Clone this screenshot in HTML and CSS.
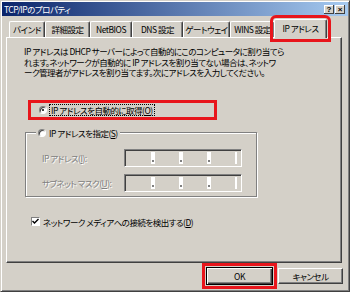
FILE: index.html
```html
<!DOCTYPE html>
<html lang="ja">
<head>
  <meta charset="UTF-8">
  <title>TCP/IPのプロパティ</title>
  <link rel="stylesheet" href="styles.css">
</head>
<body>

  <div class="dialog">
    <div class="titlebar">
      <span class="title">TCP/IPのプロパティ</span>
      <div class="caption-btns">
        <span class="cbtn">?</span>
        <span class="cbtn">×</span>
      </div>
    </div>

    <div class="tabs">
      <div class="tab">バインド</div>
      <div class="tab">詳細設定</div>
      <div class="tab">NetBIOS</div>
      <div class="tab">DNS 設定</div>
      <div class="tab">ゲートウェイ</div>
      <div class="tab">WINS 設定</div>
      <div class="tab active">IP アドレス</div>
    </div>

    <div class="panel">
      <p class="intro">IP アドレスは DHCP サーバーによって自動的にこのコンピュータに割り当てら<br>れます。ネットワークが自動的に IP アドレスを割り当てない場合は、ネットワ<br>ーク管理者がアドレスを割り当てます。次にアドレスを入力してください。</p>

      <div class="option marked">
        <span class="radio checked"></span>
        <span class="focus">IP アドレスを自動的に取得(<u>O</u>)</span>
      </div>

      <fieldset class="group">
        <legend><span class="radio"></span><span>IP アドレスを指定(<u>S</u>)</span></legend>
        <div class="field-row">
          <label class="disabled">IP アドレス(<u>I</u>):</label>
          <div class="ipbox">
            <span class="seg"></span><span class="sep"></span>
            <span class="seg"></span><span class="sep"></span>
            <span class="seg"></span><span class="sep"></span>
            <span class="seg"></span><span class="end"></span>
          </div>
        </div>
        <div class="field-row">
          <label class="disabled">サブネット マスク(<u>U</u>):</label>
          <div class="ipbox">
            <span class="seg"></span><span class="sep"></span>
            <span class="seg"></span><span class="sep"></span>
            <span class="seg"></span><span class="sep"></span>
            <span class="seg"></span><span class="end"></span>
          </div>
        </div>
      </fieldset>

      <div class="check-row">
        <span class="checkbox">
          <svg width="7" height="7" viewBox="0 0 7 7"><path d="M0.5 3 L2.5 5 L6.5 1" fill="none" stroke="#000" stroke-width="1.4"/></svg>
        </span>
        <span>ネットワーク メディアへの接続を検出する(<u>D</u>)</span>
      </div>
    </div>

    <div class="buttons">
      <button class="btn default">OK</button>
      <button class="btn">キャンセル</button>
    </div>
  </div>

</body>
</html>
```

FILE: styles.css
```css
body {
  margin: 0;
  font-family: "Noto Sans CJK JP", "Liberation Sans", sans-serif;
  font-size: 8.5px;
  letter-spacing: -0.5px;
  font-feature-settings: "palt";
  color: #000;
  background: #d4d0c8;
}

.dialog {
  width: 350px;
  height: 292px;
  box-sizing: border-box;
  background: #d4d0c8;
  border: 1px solid;
  border-color: #d4d0c8 #404040 #404040 #d4d0c8;
  box-shadow: inset 1px 1px #fff, inset -1px -1px #808080;
  padding: 1px;
  display: flex;
  flex-direction: column;
}

/* title bar */
.titlebar {
  height: 14px;
  flex: none;
  background: linear-gradient(to right, #0a246a, #a6caf0);
  display: flex;
  align-items: center;
  justify-content: space-between;
  padding: 0 3px 0 2px;
}

.title {
  color: #fff;
  line-height: 14px;
}

.caption-btns {
  display: flex;
  gap: 1px;
}

.cbtn {
  width: 10px;
  height: 9px;
  box-sizing: border-box;
  background: #d4d0c8;
  box-shadow: inset -1px -1px #404040, inset 1px 1px #fff;
  font-family: "Liberation Sans", sans-serif;
  font-weight: bold;
  font-size: 8px;
  letter-spacing: 0;
  line-height: 9px;
  text-align: center;
}

/* tabs */
.tabs {
  display: flex;
  align-items: flex-end;
  height: 21px;
  flex: none;
  margin-left: 7px;
  position: relative;
  z-index: 1;
}

.tab {
  flex: none;
  height: 16px;
  box-sizing: border-box;
  white-space: nowrap;
  text-align: center;
  line-height: 15px;
  border-top: 1px solid #fff;
  border-left: 1px solid #fff;
  border-right: 1px solid #404040;
  border-radius: 2px 2px 0 0;
  box-shadow: inset -1px 0 #808080;
}

.tab:nth-child(1) { width: 36px; }
.tab:nth-child(2) { width: 45px; }
.tab:nth-child(3) { width: 42px; }
.tab:nth-child(4) { width: 51px; }
.tab:nth-child(5) { width: 47px; }
.tab:nth-child(6) { width: 45px; }

.tab.active {
  width: 53px;
  height: 19px;
  margin-bottom: -1px;
  margin-left: -1px;
  line-height: 17px;
  background: #d4d0c8;
  outline: 3px solid #e8151b;
  outline-offset: 1px;
}

/* tab page */
.panel {
  flex: none;
  margin-left: 4px;
  width: 336px;
  height: 226px;
  box-sizing: border-box;
  border: 1px solid;
  border-color: #fff #404040 #404040 #fff;
  box-shadow: inset -1px -1px #808080;
  padding: 8px 0 0 17px;
  display: flex;
  flex-direction: column;
  align-items: flex-start;
}

.intro {
  margin: 0;
  line-height: 10.5px;
  white-space: nowrap;
}

.option {
  margin: 22px 0 0 4px;
  width: 189px;
  height: 20px;
  box-sizing: border-box;
  display: flex;
  align-items: center;
  padding-left: 8px;
  gap: 3px;
}

.marked {
  border: 3px solid #e8151b;
}

.focus {
  outline: 1px dotted #000;
  line-height: 10px;
  padding: 0 1px;
}

.radio {
  width: 8px;
  height: 8px;
  box-sizing: border-box;
  border-radius: 50%;
  background: #fff;
  border: 1px solid;
  border-color: #808080 #fff #fff #808080;
  box-shadow: inset 1px 1px #404040;
  display: inline-flex;
  align-items: center;
  justify-content: center;
  flex: none;
}

.radio.checked::after {
  content: "";
  width: 2px;
  height: 2px;
  border-radius: 50%;
  background: #000;
}

/* group box */
.group {
  margin: 8px 0 0 1px;
  width: 232px;
  box-sizing: border-box;
  border: 1px solid #808080;
  box-shadow: 1px 1px #fff, inset 1px 1px #fff;
  padding: 11px 14px 4px 0;
  min-inline-size: 0;
}

.group legend {
  margin-left: 10px;
  padding: 0 2px;
  display: flex;
  align-items: center;
  gap: 3px;
  line-height: 10px;
  background: #d4d0c8;
}

.field-row {
  display: grid;
  grid-template-columns: 98px 118px;
  align-items: center;
  margin-top: 7px;
}

.field-row:first-of-type {
  margin-top: 0;
}

.field-row label {
  padding-left: 16px;
}

.disabled {
  color: #808080;
  text-shadow: 1px 1px #fff;
}

.ipbox {
  height: 18px;
  box-sizing: border-box;
  border: 1px solid;
  border-color: #808080 #fff #fff #808080;
  box-shadow: inset 1px 1px #404040, inset -1px -1px #d4d0c8;
  padding: 2px;
  display: flex;
}

.seg {
  width: 24px;
  background: #d4d0c8;
}

.sep {
  width: 4px;
  background: #fff;
  position: relative;
}

.sep::after {
  content: "";
  position: absolute;
  left: 1px;
  top: 8px;
  width: 2px;
  height: 2px;
  background: #808080;
}

.end {
  width: 2px;
  background: #fff;
}

/* checkbox */
.check-row {
  margin: 20px 0 0 7px;
  display: flex;
  align-items: center;
  gap: 3px;
  line-height: 10px;
}

.checkbox {
  width: 9px;
  height: 9px;
  box-sizing: border-box;
  background: #fff;
  border: 1px solid;
  border-color: #808080 #fff #fff #808080;
  display: flex;
  align-items: center;
  justify-content: center;
}

/* buttons */
.buttons {
  display: flex;
  justify-content: flex-end;
  align-items: center;
  gap: 4px;
  margin-top: 4px;
  padding-right: 5px;
}

.btn {
  width: 65px;
  height: 16px;
  box-sizing: border-box;
  background: #d4d0c8;
  border: 1px solid;
  border-color: #fff #404040 #404040 #fff;
  box-shadow: inset -1px -1px #808080;
  font: inherit;
  font-feature-settings: "palt";
  letter-spacing: inherit;
  padding: 0;
  line-height: 13px;
}

.btn.default {
  width: 67px;
  height: 18px;
  border: 1px solid #000;
  box-shadow: inset 1px 1px #fff, inset -1px -1px #404040, inset -2px -2px #808080;
  outline: 3px solid #e8151b;
  outline-offset: 1px;
  margin-right: 1px;
}
```
